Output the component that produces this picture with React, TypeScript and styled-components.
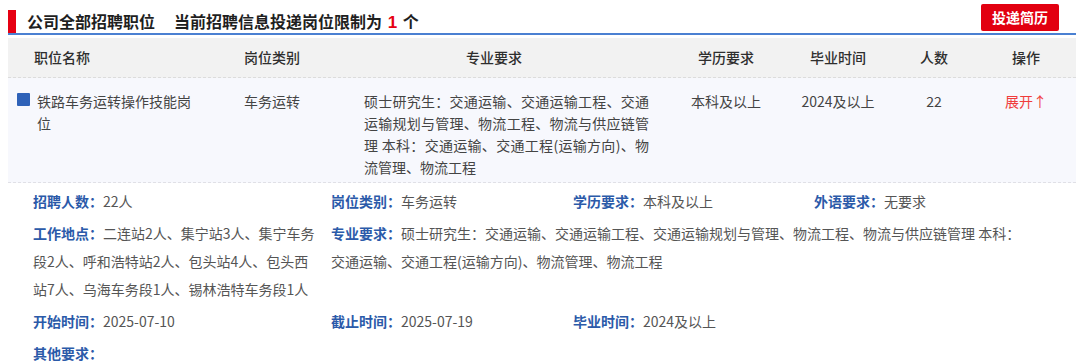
import React from "react";
import styled, { createGlobalStyle } from "styled-components";

const GlobalStyle = createGlobalStyle`
  html, body { margin: 0; padding: 0; background: #ffffff; }
  body {
    font-family: "Noto Sans CJK SC", "Noto Sans", sans-serif;
    color: #333;
  }
`;

const Page = styled.div`
  width: 1068px;
  margin-left: 8px;
`;

const TitleBar = styled.div`
  height: 33px;
  display: flex;
  justify-content: space-between;
  border-bottom: 2px solid #4a80d2;
`;

const Title = styled.h2`
  align-self: flex-end;
  margin: 0;
  height: 23px;
  line-height: 23px;
  border-left: 8px solid #e60012;
  padding-left: 11px;
  font-size: 16px;
  font-weight: 700;
  color: #1f1f1f;
  display: flex;
  gap: 19px;
  white-space: nowrap;
`;

const Limit = styled.span`
  color: #e60012;
  font-weight: 700;
  font-family: "Liberation Sans", "Noto Sans CJK SC", sans-serif;
  font-size: 17px;
  margin: 0 2px;
`;

const SubmitButton = styled.button`
  margin: 4px 17px 0 0;
  height: 27px;
  padding: 0 11px;
  border: none;
  border-radius: 2px;
  background: #e20010;
  color: #fff;
  font-family: "Noto Sans CJK SC", sans-serif;
  font-size: 14px;
  font-weight: 700;
  line-height: 27px;
  cursor: pointer;
`;

const columns = "204px 120px 336px 116px 108px 84px 100px";

const Table = styled.div`
  margin-top: 3px;
`;

const HeaderRow = styled.div`
  display: grid;
  grid-template-columns: ${columns};
  height: 39px;
  background: #f2f2f2;
  border-bottom: 1px dashed #dcdcdc;
`;

const HeaderCell = styled.div<{ $align?: "left" | "center"; $pl?: number; $pr?: number }>`
  line-height: 39px;
  font-size: 14px;
  font-weight: 500;
  color: #2e2e2e;
  text-align: ${(p) => p.$align ?? "center"};
  padding-left: ${(p) => p.$pl ?? 0}px;
  padding-right: ${(p) => p.$pr ?? 0}px;
`;

const DataRow = styled.div`
  display: grid;
  grid-template-columns: ${columns};
  background: #f7f8fd;
  padding: 12px 0 4px;
  border-bottom: 1px dashed #e0e0e6;
`;

const Cell = styled.div<{ $pl?: number; $pr?: number; $justify?: boolean }>`
  font-size: 14px;
  line-height: 22px;
  color: #444;
  text-align: ${(p) => (p.$justify ? "justify" : "center")};
  padding-left: ${(p) => p.$pl ?? 0}px;
  padding-right: ${(p) => p.$pr ?? 0}px;
`;

const NameCell = styled.div`
  display: flex;
  align-items: flex-start;
  gap: 7px;
  padding-left: 9px;
`;

const Square = styled.span`
  flex: none;
  width: 13px;
  height: 13px;
  margin-top: 3px;
  border-radius: 1px;
  background: #2f62b8;
`;

const NameText = styled.span`
  max-width: 160px;
  font-size: 14px;
  line-height: 22px;
  color: #444;
`;

const Toggle = styled.span`
  color: #f03c3c;
  cursor: pointer;
`;

const Detail = styled.div`
  display: grid;
  grid-template-columns: 298px 242px 241px 214px;
  row-gap: 4px;
  padding: 4px 0 0 25px;
`;

const Field = styled.div<{ $span?: number }>`
  grid-column: span ${(p) => p.$span ?? 1};
  font-size: 14px;
  line-height: 28px;
  color: #555;
  padding-right: ${(p) => (p.$span && p.$span > 1 ? 0 : 12)}px;
`;

const Label = styled.span`
  color: #2b5aa9;
  font-weight: 700;
`;

const major =
  "硕士研究生：交通运输、交通运输工程、交通运输规划与管理、物流工程、物流与供应链管理 本科：交通运输、交通工程(运输方向)、物流管理、物流工程";

export default function App() {
  return (
    <>
      <GlobalStyle />
      <Page>
        <TitleBar>
          <Title>
            <span>公司全部招聘职位</span>
            <span>
              当前招聘信息投递岗位限制为 <Limit>1</Limit> 个
            </span>
          </Title>
          <SubmitButton>投递简历</SubmitButton>
        </TitleBar>
        <Table>
          <HeaderRow>
            <HeaderCell $align="left" $pl={26}>职位名称</HeaderCell>
            <HeaderCell>岗位类别</HeaderCell>
            <HeaderCell $pr={12}>专业要求</HeaderCell>
            <HeaderCell>学历要求</HeaderCell>
            <HeaderCell>毕业时间</HeaderCell>
            <HeaderCell>人数</HeaderCell>
            <HeaderCell>操作</HeaderCell>
          </HeaderRow>
          <DataRow>
            <NameCell>
              <Square />
              <NameText>铁路车务运转操作技能岗位</NameText>
            </NameCell>
            <Cell>车务运转</Cell>
            <Cell $justify $pl={32} $pr={19}>{major}</Cell>
            <Cell>本科及以上</Cell>
            <Cell>2024及以上</Cell>
            <Cell>22</Cell>
            <Cell>
              <Toggle>展开↑</Toggle>
            </Cell>
          </DataRow>
          <Detail>
            <Field><Label>招聘人数：</Label>22人</Field>
            <Field><Label>岗位类别：</Label>车务运转</Field>
            <Field><Label>学历要求：</Label>本科及以上</Field>
            <Field><Label>外语要求：</Label>无要求</Field>
            <Field>
              <Label>工作地点：</Label>
              二连站2人、集宁站3人、集宁车务段2人、呼和浩特站2人、包头站4人、包头西站7人、乌海车务段1人、锡林浩特车务段1人
            </Field>
            <Field $span={3}><Label>专业要求：</Label>{major}</Field>
            <Field><Label>开始时间：</Label>2025-07-10</Field>
            <Field><Label>截止时间：</Label>2025-07-19</Field>
            <Field $span={2}><Label>毕业时间：</Label>2024及以上</Field>
            <Field $span={4}><Label>其他要求：</Label></Field>
          </Detail>
        </Table>
      </Page>
    </>
  );
}
